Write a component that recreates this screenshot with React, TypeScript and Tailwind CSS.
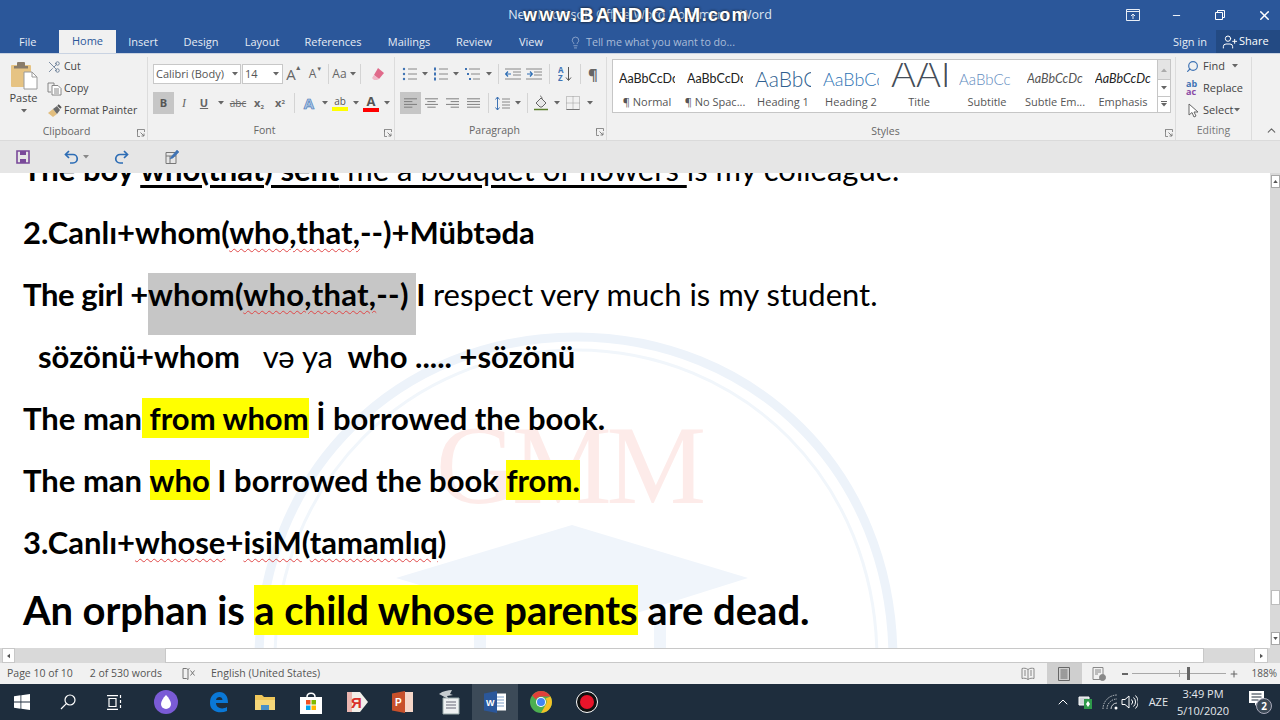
import React from "react";
import { Scissors, Lightbulb, Search, UserPlus, ChevronUp, Minus, Plus, X } from "lucide-react";

const Caret = ({ c = "#666" }: { c?: string }) => (
  <svg width="6" height="4" viewBox="0 0 6 4"><path d="M0 0h6L3 3.5z" fill={c} /></svg>
);
const Launcher = () => (
  <svg width="8" height="8" viewBox="0 0 8 8" fill="none" stroke="#777"><path d="M.5 3V.5H7.5V3M.5 .5V7.5H3" strokeWidth=".8" /><path d="M3.5 3.5L7 7M7 4.5V7H4.5" strokeWidth=".9" /></svg>
);
const Lines = ({ w = 16, c = "#777", a = "l" }: { w?: number; c?: string; a?: string }) => {
  const ys = [1.5, 4.5, 7.5, 10.5];
  const lens = a === "j" ? [14, 14, 14, 14] : [14, 9, 14, 9];
  return (
    <svg width={w} height="12" viewBox="0 0 14 12">
      {ys.map((y, i) => {
        const l = lens[i];
        const x = a === "c" ? (14 - l) / 2 : a === "r" ? 14 - l : 0;
        return <path key={i} d={`M${x} ${y}h${l}`} stroke={c} strokeWidth="1" />;
      })}
    </svg>
  );
};
const Sep = ({ h = "h-[20px]" }: { h?: string }) => <div className={`w-px ${h} bg-[#d4d4d4]`} />;

const GroupLabel = ({ t, launcher = true, cls }: { t: string; launcher?: boolean; cls?: string }) => (
  <div className={`relative h-[18px] flex items-center justify-center text-[10.5px] text-[#666] ${cls ?? ""}`}>
    {t}
    {launcher && <span className="absolute right-[2px] top-[6px]"><Launcher /></span>}
  </div>
);

function Clipboard() {
  return (
    <div className="w-[148px] shrink-0 border-r border-[#dcdcdc] flex flex-col h-[83px]">
      <div className="flex h-[65px]">
        <div className="w-[47px] flex flex-col items-center pt-[4px]">
          <svg width="28" height="29" viewBox="0 0 28 29">
            <rect x="1" y="4" width="20" height="22" rx="1" fill="#e6c383" />
            <rect x="7" y="1" width="8" height="5" rx="1" fill="#8a7c6a" />
            <rect x="4" y="5" width="14" height="2.5" fill="#8a7c6a" />
            <path d="M14 11h8l5 5v12H14z" fill="#fff" stroke="#9a9a9a" />
            <path d="M22 11v5h5" fill="none" stroke="#9a9a9a" />
          </svg>
          <span className="text-[11px] leading-[14px] text-[#444] mt-[1px]">Paste</span>
          <span className="mt-[4px]"><Caret /></span>
        </div>
        <div className="flex flex-col -mt-[1px] text-[10.5px] text-[#444]">
          <div className="h-[22px] flex items-center gap-[3px]">
            <Scissors size={14} strokeWidth={1.4} className="text-[#5f7590] -scale-x-100" />
            <span>Cut</span>
          </div>
          <div className="h-[22px] flex items-center gap-[2px]">
            <svg width="15" height="14" viewBox="0 0 15 14" fill="none" stroke="#7a7a7a" strokeWidth=".9"><path d="M1 1h6v2M1 1v9h3" /><path d="M5 3.5h6l3 3V13H5z" fill="#fff" /><path d="M7 7h5M7 9h5M7 11h5" /></svg>
            <span>Copy</span>
          </div>
          <div className="h-[22px] flex items-center gap-[1px]">
            <svg width="16" height="14" viewBox="0 0 16 14"><path d="M1 9l5-4 4 5-4 3z" fill="#e2be7e" /><path d="M6 5l4 5 3-4-3-4z" fill="#6a6a6a" /><path d="M11 1l3 3" stroke="#555" strokeWidth="2" /></svg>
            <span className="whitespace-nowrap">Format Painter</span>
          </div>
        </div>
      </div>
      <GroupLabel t="Clipboard" cls="pr-[14px] mt-[1px]" />
    </div>
  );
}

function FontGroup() {
  return (
    <div className="w-[247px] shrink-0 border-r border-[#dcdcdc] flex flex-col h-[83px] pl-[5px]">
      <div className="flex items-center h-[22px] mt-[6px]">
        <div className="w-[88px] h-[20px] bg-white border border-[#c8c8c8] flex items-center justify-between px-[2px] text-[11px] text-[#555] whitespace-nowrap">
          <span>Calibri (Body)</span><Caret />
        </div>
        <div className="w-[41px] h-[20px] bg-white border border-[#c8c8c8] flex items-center justify-between pl-[2px] pr-[3px] ml-px text-[11px] text-[#555]">
          <span>14</span><Caret />
        </div>
        <div className="w-[22px] flex justify-center text-[15px] text-[#666]">A<span className="text-[7px] -ml-px">▲</span></div>
        <div className="w-[21px] flex justify-center text-[12px] text-[#666]">A<span className="text-[6px]">▼</span></div>
        <div className="mx-[2px]"><Sep /></div>
        <div className="w-[26px] flex items-center justify-center gap-[3px] text-[12px] text-[#666]">Aa<Caret /></div>
        <div className="mx-[3px]"><Sep /></div>
        <div className="w-[26px] flex justify-center">
          <svg width="15" height="14" viewBox="0 0 15 14"><path d="M8 1l6 5-5 6-5-4z" fill="#e06a8a" /><path d="M4 8l5 4-2 1H4L2 11z" fill="#f0b9c8" /></svg>
        </div>
      </div>
      <div className="flex items-center h-[23px] mt-[7px]">
        <div className="w-[21px] h-[22px] bg-[#c6c6c6] flex items-center justify-center text-[11px] font-bold text-[#555]">B</div>
        <div className="w-[20px] text-center text-[12px] italic text-[#666] font-['Liberation_Serif',serif]">I</div>
        <div className="w-[20px] text-center text-[11px] underline font-bold text-[#666]">U</div>
        <div className="w-[13px] flex justify-center"><Caret /></div>
        <div className="w-[22px] text-center text-[10px] line-through text-[#666]">abc</div>
        <div className="w-[20px] text-center text-[11px] font-bold text-[#666]">x<sub className="text-[6px]">2</sub></div>
        <div className="w-[22px] text-center text-[11px] font-bold text-[#666]">x<sup className="text-[6px]">2</sup></div>
        <div className="mx-[3px]"><Sep /></div>
        <div className="w-[22px] flex justify-center text-[15px] font-bold text-[#a9c3e4] [-webkit-text-stroke:0.6px_#3f73b4]">A</div>
        <div className="w-[9px] flex justify-center"><Caret /></div>
        <div className="w-[22px] flex flex-col items-center leading-none">
          <span className="text-[10px] text-[#555] leading-[11px]">ab</span>
          <span className="w-[16px] h-[4px] bg-[#ffff00]" />
        </div>
        <div className="w-[9px] flex justify-center"><Caret /></div>
        <div className="w-[22px] flex flex-col items-center leading-none">
          <span className="text-[13px] font-bold text-[#555] leading-[13px]">A</span>
          <span className="w-[16px] h-[4px] bg-[#ff0000]" />
        </div>
        <div className="w-[10px] flex justify-center"><Caret /></div>
      </div>
      <GroupLabel t="Font" cls="mt-[8px] pr-[18px]" />
    </div>
  );
}

const Bullet = ({ kind }: { kind: string }) => (
  <svg width="16" height="14" viewBox="0 0 16 14">
    {[2, 7, 12].map((y, i) => (
      <g key={y}>
        {kind === "b" && <circle cx="2" cy={y} r="1.2" fill="#3f73b4" />}
        {kind === "n" && <rect x="1" y={y - 1.5} width="2" height="3" fill="#3f73b4" />}
        {kind === "m" && <rect x={i * 2} y={y - 1} width="2" height="2" fill="#3f73b4" />}
        <path d={`M${kind === "m" ? 4 + i * 2 : 6} ${y}H15`} stroke="#888" />
      </g>
    ))}
  </svg>
);

function Paragraph() {
  return (
    <div className="w-[212px] shrink-0 border-r border-[#dcdcdc] flex flex-col h-[83px] pl-[4px]">
      <div className="flex items-center h-[22px] mt-[6px] pl-[3px]">
        <div className="w-[16px]"><Bullet kind="b" /></div>
        <div className="w-[13px] flex justify-center"><Caret /></div>
        <div className="w-[16px] ml-[2px]"><Bullet kind="n" /></div>
        <div className="w-[13px] flex justify-center"><Caret /></div>
        <div className="w-[18px] ml-[3px]"><Bullet kind="m" /></div>
        <div className="w-[12px] flex justify-center"><Caret /></div>
        <div className="mx-[3px]"><Sep /></div>
        <div className="w-[21px] flex justify-center">
          <svg width="16" height="12" viewBox="0 0 16 12"><path d="M0 1h16M8 4h8M8 7h8M0 11h16" stroke="#888" /><path d="M6 6H1M3 3.5L.7 6 3 8.5" stroke="#2f6fb5" fill="none" strokeWidth="1.2" /></svg>
        </div>
        <div className="w-[21px] flex justify-center">
          <svg width="16" height="12" viewBox="0 0 16 12"><path d="M0 1h16M8 4h8M8 7h8M0 11h16" stroke="#888" /><path d="M1 6h5M4 3.5L6.3 6 4 8.5" stroke="#2f6fb5" fill="none" strokeWidth="1.2" /></svg>
        </div>
        <div className="mx-[5px]"><Sep /></div>
        <div className="w-[20px] flex justify-center">
          <svg width="14" height="16" viewBox="0 0 14 16"><text x="0" y="7" fontSize="8" fontWeight="700" fill="#3f73b4">A</text><text x="0" y="15" fontSize="8" fontWeight="700" fill="#3f73b4">Z</text><path d="M10.5 1v13M8 11.5l2.5 3 2.5-3" stroke="#555" fill="none" /></svg>
        </div>
        <div className="mx-[5px]"><Sep /></div>
        <div className="w-[14px] text-[15px] font-bold text-[#666] text-center">¶</div>
      </div>
      <div className="flex items-center h-[23px] mt-[7px] ml-[1px]">
        <div className="w-[21px] h-[22px] bg-[#c6c6c6] flex items-center justify-center"><Lines w={13} c="#777" a="l" /></div>
        <div className="w-[21px] flex justify-center"><Lines w={13} a="c" /></div>
        <div className="w-[21px] flex justify-center"><Lines w={13} a="r" /></div>
        <div className="w-[21px] flex justify-center"><Lines w={13} a="j" /></div>
        <div className="ml-[4px] mr-[3px]"><Sep /></div>
        <div className="w-[20px] flex justify-center">
          <svg width="15" height="15" viewBox="0 0 15 15"><path d="M2.5 1v13M.5 3.500l2-2.500 2 2.500M.5 11.500l2 2.500 2-2.500" stroke="#3f73b4" fill="none" /><path d="M7 3h8M7 6h8M7 9h8M7 12h8" stroke="#888" /></svg>
        </div>
        <div className="w-[12px] flex justify-center"><Caret /></div>
        <div className="mx-[3px]"><Sep /></div>
        <div className="w-[20px] flex justify-center">
          <svg width="16" height="16" viewBox="0 0 16 16"><path d="M3 8l5-5 5 5-4 4H7z" fill="#e8e8e8" stroke="#666" /><path d="M7 1c1 0 2 1 2 3" stroke="#666" fill="none" /><path d="M1 14.500h14" stroke="#5a7f2a" strokeWidth="1.5" /></svg>
        </div>
        <div className="w-[12px] flex justify-center"><Caret /></div>
        <div className="w-[20px] flex justify-center">
          <svg width="14" height="14" viewBox="0 0 14 14" fill="none" stroke="#999" strokeDasharray="1 1"><path d="M.5.5h13v13H.5zM7 .5v13M.5 7h13" /><path d="M.5 13.500h13" strokeDasharray="none" stroke="#777" /></svg>
        </div>
        <div className="w-[14px] flex justify-center"><Caret /></div>
      </div>
      <GroupLabel t="Paragraph" cls="mt-[8px] pr-[16px]" />
    </div>
  );
}

const base = "font-['Lato',sans-serif]";
const StyleItem = ({ preview, label }: { preview: React.ReactNode; label: string }) => (
  <div className="w-[68px] shrink-0 flex flex-col items-center">
    <div className="h-[32px] w-[56px] overflow-hidden flex items-center whitespace-nowrap">{preview}</div>
    <div className="text-[11px] leading-[14px] text-[#555] whitespace-nowrap">{label}</div>
  </div>
);

function Styles() {
  return (
    <div className="w-[569px] shrink-0 border-r border-[#dcdcdc] flex flex-col h-[83px] pl-[5px]">
      <div className="mt-[2px] w-[559px] h-[56px] bg-white border border-[#c6c6c6] flex">
        <div className="flex-1 flex pt-[3px]">
          <StyleItem preview={<span className={`${base} text-[12.5px] text-[#222]`}>AaBbCcDc</span>} label="¶ Normal" />
          <StyleItem preview={<span className={`${base} text-[12.5px] text-[#222]`}>AaBbCcDc</span>} label="¶ No Spac..." />
          <StyleItem preview={<span className={`${base} text-[21px] font-light text-[#2f5f90]`}>AaBbCc</span>} label="Heading 1" />
          <StyleItem preview={<span className={`${base} text-[18px] font-light text-[#2e74b5]`}>AaBbCc</span>} label="Heading 2" />
          <StyleItem preview={<span className={`${base} text-[38px] leading-[38px] text-[#444d58] -mt-[14px] font-light`}>AAI</span>} label="Title" />
          <StyleItem preview={<span className={`${base} text-[15px] font-light text-[#5f8cc0]`}>AaBbCc</span>} label="Subtitle" />
          <StyleItem preview={<span className={`${base} text-[12.5px] italic text-[#555]`}>AaBbCcDc</span>} label="Subtle Em..." />
          <StyleItem preview={<span className={`${base} text-[12.5px] italic text-[#222]`}>AaBbCcDc</span>} label="Emphasis" />
        </div>
        <div className="w-[14px] border-l border-[#c6c6c6] flex flex-col">
          <div className="h-[19px] bg-[#e4e4e4] flex items-center justify-center"><svg width="6" height="4" viewBox="0 0 6 4"><path d="M0 4h6L3 .5z" fill="#aaa" /></svg></div>
          <div className="h-[18px] border-y border-[#c6c6c6] flex items-center justify-center"><Caret /></div>
          <div className="flex-1 flex flex-col items-center justify-center gap-[1px]"><div className="w-[6px] h-px bg-[#666]" /><Caret /></div>
        </div>
      </div>
      <GroupLabel t="Styles" cls="mt-[10px] pr-[16px]" />
    </div>
  );
}

function Editing() {
  return (
    <div className="w-[76px] shrink-0 border-r border-[#dcdcdc] flex flex-col h-[83px] text-[11px] text-[#444]">
      <div className="h-[65px] pl-[10px] -mt-[2px]">
        <div className="h-[22px] flex items-center gap-[4px]">
          <Search size={13} strokeWidth={2.2} className="text-[#3f73b4] -scale-x-100" />
          <span>Find</span><span className="ml-[3px]"><Caret /></span>
        </div>
        <div className="h-[22px] flex items-center gap-[2px]">
          <span className="text-[9px] leading-[8px] font-bold w-[15px]"><span className="text-[#3f73b4]">ab</span><br /><span className="text-[#8a4aa5]">ac</span></span>
          <span>Replace</span>
        </div>
        <div className="h-[22px] flex items-center gap-[4px] pl-[2px]">
          <svg width="11" height="15" viewBox="0 0 11 15"><path d="M1 1v11l3-2.500 2 4.500 2-1-2-4h4z" fill="#fff" stroke="#666" /></svg>
          <span>Select</span><span className="-ml-[3px]"><Caret /></span>
        </div>
      </div>
      <GroupLabel t="Editing" launcher={false} cls="text-[#777] mt-[2px]" />
    </div>
  );
}

const DocLine = ({ children, cls = "" }: { children: React.ReactNode; cls?: string }) => (
  <div className={`h-[62px] flex items-center whitespace-pre font-['Lato',sans-serif] text-[31px] text-black ${cls}`}>
    <div>{children}</div>
  </div>
);
const squig = "underline decoration-wavy decoration-[#e04848] decoration-1 underline-offset-[4px]";
const Hi = ({ children, cls = "leading-[40px]" }: { children: React.ReactNode; cls?: string }) => (
  <span className={`inline-block bg-[#ffff00] ${cls}`}>{children}</span>
);

function Doc() {
  return (
    <div className="relative flex-1 overflow-hidden bg-white">
      <svg className="absolute left-0 top-0" width="1270" height="475" viewBox="0 173 1270 475">
        <path d="M259 660C259 470 400 337 576 337S893 470 893 660" fill="none" stroke="#edf3fa" strokeWidth="9" />
        <path d="M275 660C275 480 410 350 576 350S877 480 877 660" fill="none" stroke="#f1f6fb" strokeWidth="3" />
        <path d="M572 525L748 578 640 612 572 630 396 578z" fill="#f0f5fb" />
        <path d="M480 610v50M660 610v50" stroke="#f0f5fb" strokeWidth="12" />
      </svg>
      <div className="absolute left-[436px] top-[232px] font-['Liberation_Serif',serif] text-[112px] leading-[120px] text-[#fdebe9] tracking-[-5px]">GMM</div>
      <div className="relative pl-[23px] -mt-[17px] font-bold">
        <div className="h-[29px] flex items-end">
          <div className="whitespace-pre font-['Lato',sans-serif] text-[31px] leading-[32px] text-black">
            The boy <span className="underline underline-offset-4">who(that) sent</span><span className="font-normal underline underline-offset-4"> me a bouquet of flowers </span><span className="font-normal">is my colleague.</span>
          </div>
        </div>
        <div className="h-[16px]" />
        <DocLine>2.Canlı+whom(<span className={squig}>who,that,</span>--)+Mübtəda</DocLine>
        <div className="relative">
          <div className="absolute left-[125px] top-[10px] h-[62px] w-[268px] bg-[#c6c6c6]" />
          <div className="relative"><DocLine><span className="tracking-[-0.4px]">The girl +</span><span className="tracking-[0.25px]">whom(<span className={squig}>who,that,</span>--)</span> I <span className="font-normal">respect very much is my student.</span></DocLine></div>
        </div>
        <DocLine cls="pl-[15px]">sözönü+whom   <span className="font-normal">və ya</span>  who ..... +sözönü</DocLine>
        <DocLine>The man<Hi> from whom</Hi> İ borrowed the book.</DocLine>
        <DocLine>The man <Hi>who</Hi> I borrowed the book <Hi>from.</Hi></DocLine>
        <DocLine>3.Canlı+<span className={squig}>whose</span>+<span className={squig}>isiM</span>(<span className={squig}>tamamlıq</span>)</DocLine>
        <div className="h-[74px] flex items-center whitespace-pre font-['Lato',sans-serif] text-[40px] text-black">
          <div><span className="tracking-[-0.15px]">An orphan is </span><Hi cls="leading-[50px]">a child whose parents</Hi> are dead.</div>
        </div>
      </div>
    </div>
  );
}

const TaskBtn = ({ children, cls = "" }: { children: React.ReactNode; cls?: string }) => (
  <div className={`w-[46px] h-[36px] flex items-center justify-center shrink-0 ${cls}`}>{children}</div>
);

const Tab = ({ t, cls }: { t: string; cls: string }) => (
  <div className={`h-[22px] flex items-center justify-center whitespace-nowrap ${cls}`}>{t}</div>
);

export default function App() {
  return (
    <div className="w-[1280px] h-[720px] overflow-hidden flex flex-col bg-white font-['Open_Sans',sans-serif]">
      <div className="relative h-[30px] bg-[#2b579a] shrink-0 flex items-center">
        <div className="flex-1 text-center text-[12.5px] text-[#dfe7f2] whitespace-nowrap">New Microsoft Office Word Document - Word</div>
        <div className="absolute left-[523px] top-[2px] h-[26px] flex items-center font-['Liberation_Sans',sans-serif] font-bold text-white [text-shadow:0_0_2px_#1b2430,0_0_3px_#1b2430] whitespace-nowrap">
          <span className="text-[18px] tracking-[2.500px]">www.</span>
          <span className="text-[20px] tracking-[1.700px]">BANDICAM</span>
          <span className="text-[18px] tracking-[1.200px]">.com</span>
        </div>
        <div className="absolute right-0 top-0 h-[30px] flex items-center">
          <div className="w-[44px] flex justify-center">
            <svg width="14" height="12" viewBox="0 0 14 12" fill="none" stroke="#e8eef6"><path d="M.5 .5h13v11H.5zM.5 2.500h13" /><path d="M7 10V5M5 7l2-2 2 2" /></svg>
          </div>
          <div className="w-[43px] flex justify-center"><Minus size={11} strokeWidth={2} className="text-white" /></div>
          <div className="w-[44px] flex justify-center">
            <svg width="10" height="10" viewBox="0 0 10 10" fill="none" stroke="#fff"><path d="M.5 2.500h7v7h-7zM2.500 2.500v-2h7v7h-2" /></svg>
          </div>
          <div className="w-[32px] ml-[6px] flex justify-center"><X size={15} strokeWidth={2.4} className="text-white" /></div>
        </div>
      </div>
      <div className="h-[23px] bg-[#2b579a] shrink-0 flex items-end text-[11px] text-[#e6ecf5] relative">
        <div className="w-[59px] h-[22px] pl-[19px] flex items-center">File</div>
        <div className="w-[57px] h-[23px] bg-[#f1f1f1] text-[#2b579a] flex items-center justify-center">Home</div>
        <Tab t="Insert" cls="w-[54px]" />
        <Tab t="Design" cls="w-[62px]" />
        <Tab t="Layout" cls="w-[60px]" />
        <Tab t="References" cls="w-[82px]" />
        <Tab t="Mailings" cls="w-[70px]" />
        <Tab t="Review" cls="w-[60px]" />
        <Tab t="View" cls="w-[54px]" />
        <div className="h-[22px] flex items-center gap-[4px] ml-[11px] text-[#a9bcd8] whitespace-nowrap">
          <Lightbulb size={13} strokeWidth={1.3} />
          <span className="text-[10.7px]">Tell me what you want to do...</span>
        </div>
        <div className="flex-1" />
        <div className="h-[22px] flex items-center mr-[9px]">Sign in</div>
        <div className="w-[64px] h-[23px] bg-[#234a83] flex items-center gap-[1px] pl-[6px]">
          <UserPlus size={16} strokeWidth={1.5} className="text-white" />
          <span className="text-white">Share</span>
        </div>
      </div>
      <div className="h-[87px] shrink-0 bg-[#f1f1f1] border-t border-[#c9d3e2] flex items-start pt-[3px] relative">
        <Clipboard />
        <FontGroup />
        <Paragraph />
        <Styles />
        <Editing />
        <ChevronUp size={13} className="absolute right-[2px] bottom-[3px] text-[#666]" />
      </div>
      <div className="h-[33px] shrink-0 bg-[#e6e6e6] border-t border-[#dadada] flex items-center pl-[15px]">
        <svg width="16" height="16" viewBox="0 0 16 16"><path d="M2 2h12v12H2z" fill="none" stroke="#7a4a9a" strokeWidth="1.6" /><path d="M5 2h6v4H5zM5 10h6v4H5z" fill="#7a4a9a" /></svg>
        <svg className="ml-[33px]" width="16" height="14" viewBox="0 0 16 14" fill="none" stroke="#2d6db5" strokeWidth="1.7"><path d="M5 1L1.500 4.500 5 8" /><path d="M2 4.500h7a4.200 4.200 0 0 1 0 8.500H6" /></svg>
        <span className="ml-[3px]"><Caret c="#888" /></span>
        <svg className="ml-[24px]" width="16" height="14" viewBox="0 0 16 14" fill="none" stroke="#2d6db5" strokeWidth="1.7"><path d="M11 1l3.500 3.500L11 8" /><path d="M14 4.500H7a4.200 4.200 0 0 0 0 8.500h3" /></svg>
        <svg className="ml-[35px]" width="16" height="16" viewBox="0 0 16 16" fill="none" stroke="#777"><path d="M2 3.500h10v11H2zM2 7h10M6 7v7.500" /><path d="M7 8l6-7 2 2-6 6-3 1z" fill="#3f73b4" stroke="#3f73b4" strokeWidth=".5" /></svg>
      </div>
      <div className="flex-1 flex min-h-0">
        <Doc />
        <div className="w-[10px] shrink-0 bg-[#d9d9d9] flex flex-col items-end justify-between">
          <div className="w-[9px] h-[13px] mt-[2px] bg-white border border-[#a8a8a8] flex items-center justify-center"><svg width="5" height="3" viewBox="0 0 6 4"><path d="M0 4h6L3 0z" fill="#555" /></svg></div>
          <div className="flex flex-col items-end">
            <div className="w-[9px] h-[15px] mb-[27px] bg-white border border-[#bdbdbd]" />
            <div className="w-[9px] h-[13px] mb-[3px] bg-white border border-[#a8a8a8] flex items-center justify-center"><svg width="5" height="3" viewBox="0 0 6 4"><path d="M0 0h6L3 4z" fill="#555" /></svg></div>
          </div>
        </div>
      </div>
      <div className="h-[15px] shrink-0 bg-[#d9d9d9] flex items-stretch pl-[2px]">
        <div className="w-[13px] bg-white border border-[#c8c8c8] flex items-center justify-center"><svg width="3" height="6" viewBox="0 0 4 6"><path d="M4 0v6L0 3z" fill="#555" /></svg></div>
        <div className="w-[150px]" />
        <div className="w-[1039px] bg-white border border-[#c8c8c8]" />
        <div className="w-[50px]" />
        <div className="w-[14px] bg-white border border-[#c8c8c8] flex items-center justify-center"><svg width="3" height="6" viewBox="0 0 4 6"><path d="M0 0v6l4-3z" fill="#555" /></svg></div>
      </div>
      <div className="h-[21px] shrink-0 bg-[#f1f1f1] flex items-center text-[10.5px] text-[#555] whitespace-nowrap">
        <span className="ml-[7px]">Page 10 of 10</span>
        <span className="ml-[17px]">2 of 530 words</span>
        <svg className="ml-[20px]" width="14" height="14" viewBox="0 0 14 14" fill="none" stroke="#777"><path d="M1 1.500h3.500l1.500 1v10l-1.500-1H1z" /><path d="M6 2.500l1.500-1" /><path d="M8.500 3.500l4 5M12.500 3.500l-4 5" /></svg>
        <span className="ml-[15px]">English (United States)</span>
        <div className="flex-1" />
        <svg className="mr-[12px]" width="14" height="14" viewBox="0 0 14 14" fill="none" stroke="#888"><path d="M7 2.500C5 1 3 1 1 1.500v10c2-.5 4-.5 6 1 2-1.500 4-1.500 6-1v-10c-2-.5-4-.5-6 1zM7 2.500v10M3 4h2M3 6h2M3 8h2M9 4h2M9 6h2M9 8h2" /></svg>
        <div className="w-[35px] h-[21px] bg-[#cfcfcf] flex items-center justify-center mr-[10px]">
          <svg width="12" height="14" viewBox="0 0 12 14" fill="none" stroke="#666"><path d="M.5 .5h11v13H.5zM2.500 3h7M2.500 5h7M2.500 7h7M2.500 9h7M2.500 11h7" /></svg>
        </div>
        <svg className="mr-[16px]" width="14" height="14" viewBox="0 0 14 14" fill="none" stroke="#888"><path d="M1 .5h10v12H1zM3 3h6M3 5h6M3 7h3" /><circle cx="10.500" cy="10.500" r="3" fill="#888" /></svg>
        <div className="w-[6px] h-[2px] bg-[#666] mr-[4px]" />
        <div className="relative w-[94px] h-px bg-[#a8a8a8] mr-[3px]">
          <div className="absolute left-[47px] -top-[3px] w-px h-[7px] bg-[#a8a8a8]" />
          <div className="absolute left-[55px] -top-[6px] w-[3px] h-[13px] bg-[#666]" />
        </div>
        <Plus size={10} strokeWidth={2.5} className="text-[#666]" />
        <span className="ml-[13px] mr-[3px] text-[10px]">188%</span>
      </div>
      <div className="h-[36px] shrink-0 bg-[#1e2d3d] flex items-center text-[#e4e8ec]">
        <TaskBtn cls="-ml-[1px]">
          <svg width="16" height="16" viewBox="0 0 16 16" fill="#fff"><path d="M0 2.200l6.500-.9v6.300H0zM7.300 1.200L16 0v7.600H7.300zM0 8.400h6.500v6.300L0 13.800zM7.300 8.400H16V16l-8.700-1.200z" /></svg>
        </TaskBtn>
        <TaskBtn>
          <svg width="16" height="16" viewBox="0 0 16 16" fill="none" stroke="#fff" strokeWidth="1.2"><circle cx="10" cy="6" r="5" /><path d="M6.300 9.700L1 15" /></svg>
        </TaskBtn>
        <TaskBtn>
          <svg width="16" height="15" viewBox="0 0 16 15" fill="none" stroke="#fff" strokeWidth="1.2"><path d="M3 3.500h7v8H3zM1 .7h11M1 14.300h11M14.500 0v3M14.500 5v3M14.500 10v3" /></svg>
        </TaskBtn>
        <TaskBtn cls="ml-[6px]">
          <svg width="24" height="24" viewBox="0 0 24 24"><circle cx="12" cy="12" r="12" fill="#7a5bd6" /><path d="M12 5c3 3 5 6.500 5 9a5 5 0 0 1-10 0c0-2.500 2-6 5-9z" fill="#fff" /></svg>
        </TaskBtn>
        <TaskBtn cls="ml-[7px]">
          <svg width="20" height="22" viewBox="0 0 20 22"><path d="M1 12C1 5 5 1 10.500 1 16 1 19 5 19 12H7c0 5 6 7 11 4v4c-7 3-17 1-17-8zM7 9h6.500c0-4-6-4-6.500 0z" fill="#0a78d7" /></svg>
        </TaskBtn>
        <TaskBtn>
          <svg width="20" height="20" viewBox="0 0 20 20"><path d="M0 3h7l2 2h11v13H0z" fill="#f0c75a" /><path d="M0 8h20v10H0z" fill="#f6d77a" /><path d="M6 13h8v5H6z" fill="#4a90c8" /></svg>
        </TaskBtn>
        <TaskBtn>
          <svg width="22" height="24" viewBox="0 0 22 24"><path d="M7 7C7 2 15 2 15 7" fill="none" stroke="#fff" strokeWidth="1.5" /><path d="M0 7h22v17H0z" fill="#fff" /><path d="M6 10h4.500v4.500H6z" fill="#f25022" /><path d="M11.500 10H16v4.500h-4.500z" fill="#7fba00" /><path d="M6 15.500h4.500V20H6z" fill="#00a4ef" /><path d="M11.500 15.500H16V20h-4.500z" fill="#ffb900" /></svg>
        </TaskBtn>
        <TaskBtn>
          <svg width="22" height="24" viewBox="0 0 22 24"><path d="M1 2h13l8 10-8 10H1z" fill="#f2efe9" /><path d="M1 2h5v20H1z" fill="#d9302a" opacity=".3" /><text x="5" y="18" fontSize="15" fontWeight="700" fill="#d9302a" fontFamily="Liberation Sans">Я</text></svg>
        </TaskBtn>
        <TaskBtn>
          <svg width="22" height="22" viewBox="0 0 22 22"><path d="M11 1h10v20H11z" fill="#f5d6c8" /><path d="M0 2.500L13 0v22L0 19.500z" fill="#c8502a" /><text x="3" y="15" fontSize="10" fontWeight="700" fill="#fff" fontFamily="Liberation Sans">P</text></svg>
        </TaskBtn>
        <TaskBtn>
          <svg width="22" height="26" viewBox="0 0 22 26"><path d="M5 9h16v16H5z" fill="#eef1f2" stroke="#9aa" /><path d="M8 13h10M8 16h10M8 19h10" stroke="#667" /><path d="M1 5c4-3 9-4 13-4l-2 4 3 1-6 1 2 4C8 8 4 7 1 5z" fill="#c6ccd0" /></svg>
        </TaskBtn>
        <TaskBtn cls="bg-[#3c4a58]">
          <svg width="22" height="22" viewBox="0 0 22 22"><path d="M10 2.500h12v17H10z" fill="#fff" /><path d="M12 6h8M12 9h8M12 12h8M12 15h8" stroke="#7f9fc8" /><path d="M0 2.500L13 0v22L0 19.500z" fill="#2b579a" /><text x="2" y="14.500" fontSize="9" fontWeight="700" fill="#fff" fontFamily="Liberation Sans">W</text></svg>
        </TaskBtn>
        <TaskBtn>
          <svg width="22" height="22" viewBox="0 0 22 22"><circle cx="11" cy="11" r="11" fill="#4caf50" /><path d="M11 0a11 11 0 0 1 9.500 5.500H11a5.500 5.500 0 0 0-5 3L2.200 4.500A11 11 0 0 1 11 0z" fill="#e0403a" /><path d="M20.500 5.500A11 11 0 0 1 11 22l4.700-8.200A5.500 5.500 0 0 0 15.500 7.500z" fill="#f6c026" /><circle cx="11" cy="11" r="5" fill="#fff" /><circle cx="11" cy="11" r="4" fill="#4285f4" /></svg>
        </TaskBtn>
        <TaskBtn>
          <svg width="22" height="22" viewBox="0 0 22 22"><circle cx="11" cy="11" r="10.500" fill="#111" stroke="#fff" strokeWidth="1" /><circle cx="11" cy="11" r="7" fill="#e8142a" /></svg>
        </TaskBtn>
        <div className="flex-1" />
        <ChevronUp size={16} strokeWidth={1.5} className="text-white mr-[7px]" />
        <svg className="mr-[8px]" width="16" height="16" viewBox="0 0 16 16"><path d="M1 3h10v8H1z" fill="#d0d6da" stroke="#fff" /><path d="M6 5h8v10H6z" fill="#2e9a4a" /><path d="M10 7l2 3-2 3-2-3z" fill="#fff" /></svg>
        <svg className="mr-[3px]" width="16" height="16" viewBox="0 0 16 16" fill="none" stroke="#c8ccd0"><path d="M1 15A14 14 0 0 1 15 1M5 15A10 10 0 0 1 15 5" strokeDasharray="1.500 1" /><path d="M9 15a6 6 0 0 1 6-6" /><circle cx="14" cy="14" r="1.500" fill="#fff" stroke="none" /></svg>
        <svg className="mr-[11px]" width="17" height="16" viewBox="0 0 17 16" fill="none" stroke="#fff"><path d="M1 5.500h3L8 2v12l-4-3.500H1z" /><path d="M10.500 5.500a3.500 3.500 0 0 1 0 5M12.500 3.500a6 6 0 0 1 0 9M14.500 1.500a9 9 0 0 1 0 13" /></svg>
        <span className="text-[11px] mr-[10px]">AZE</span>
        <div className="w-[50px] flex flex-col items-center text-[11px] leading-[17px] mr-[20px] whitespace-nowrap">
          <span>3:49 PM</span><span>5/10/2020</span>
        </div>
        <div className="relative w-[24px] h-[24px] mr-[8px]">
          <svg width="17" height="17" viewBox="0 0 17 17" className="absolute left-0 top-0"><path d="M1 1h15v12H9l-2 3v-3H1z" fill="#fff" /><path d="M3.500 4h10M3.500 7h10M3.500 10h7" stroke="#1e2d3d" /></svg>
          <span className="absolute right-0 bottom-0 w-[16px] h-[16px] rounded-full bg-[#3b4956] border border-[#aab] text-white text-[10px] leading-[14px] text-center font-bold">2</span>
        </div>
      </div>
    </div>
  );
}
